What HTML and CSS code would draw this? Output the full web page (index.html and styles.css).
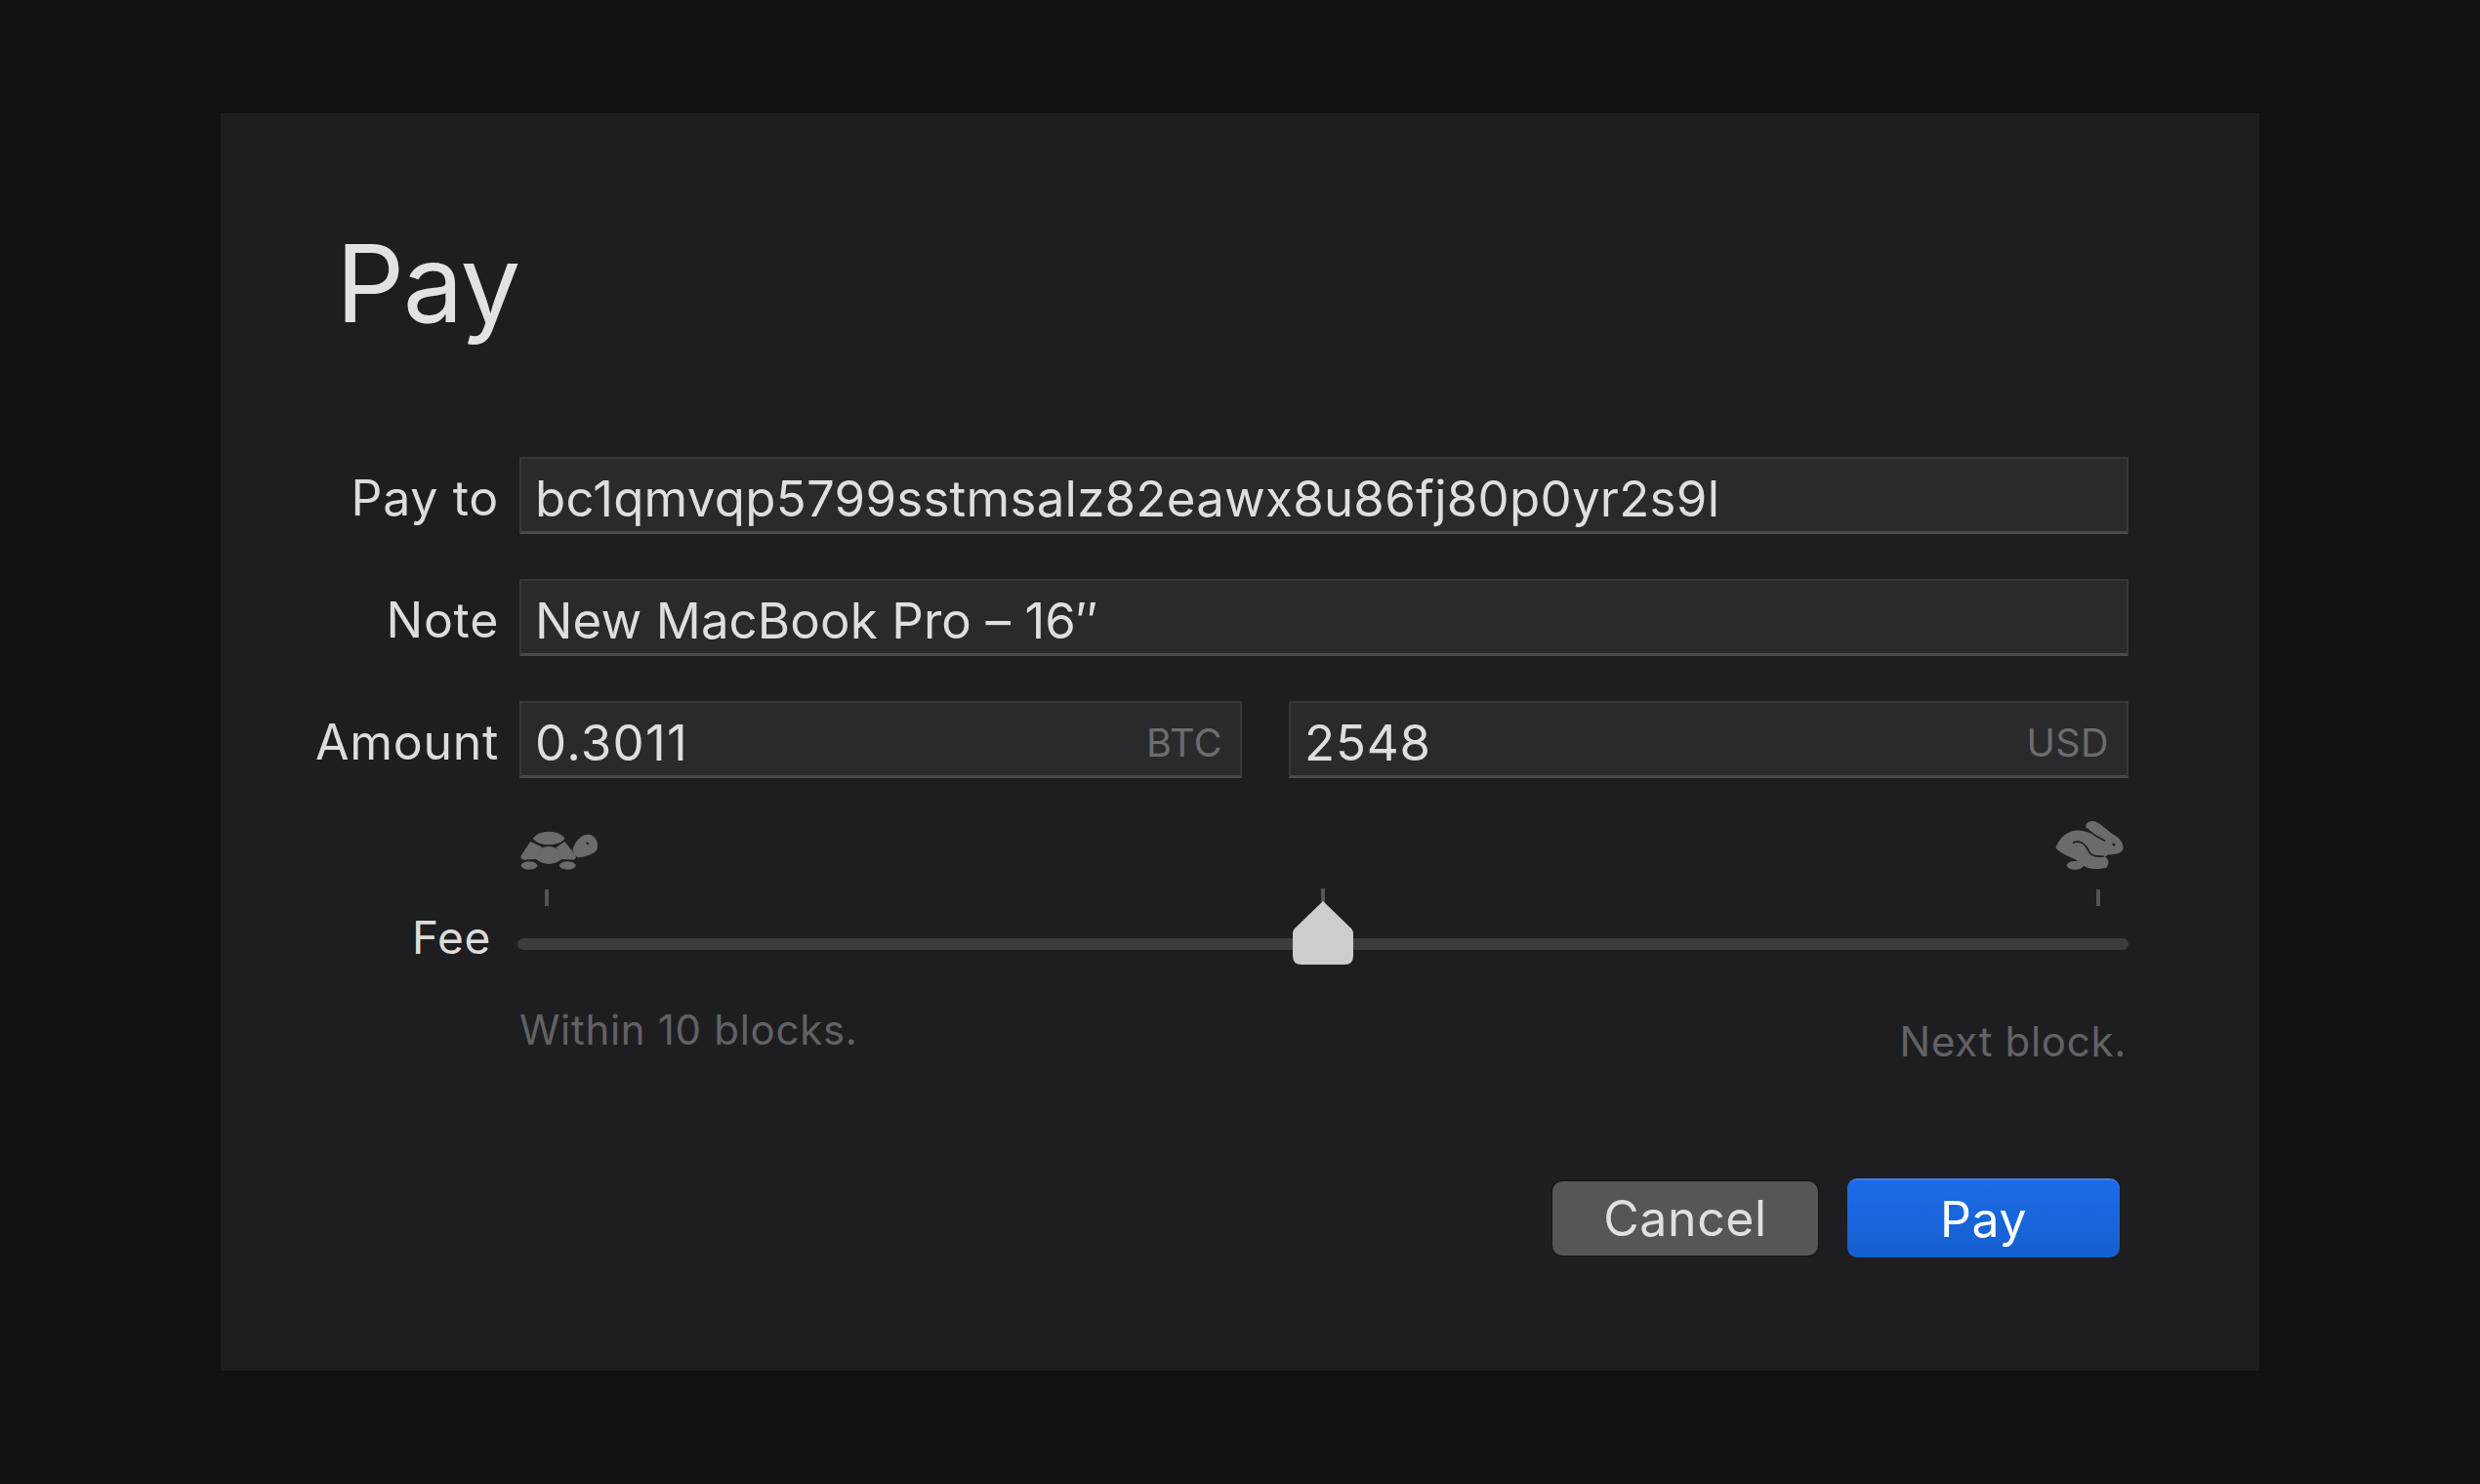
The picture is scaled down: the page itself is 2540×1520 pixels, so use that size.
FILE: index.html
```html
<!DOCTYPE html>
<html lang="en">
<head>
    <meta charset="UTF-8">
    <title>Pay</title>
    <link rel="stylesheet" href="styles.css">
</head>
<body>

    <div class="window">
        <h1>Pay</h1>

        <!-- Address, note, amount -->
        <div class="row">
            <div class="label">Pay to</div>
            <div class="field address">bc1qmvqp5799sstmsalz82eawx8u86fj80p0yr2s9l</div>
        </div>
        <div class="row">
            <div class="label">Note</div>
            <div class="field note">New MacBook Pro – 16″</div>
        </div>
        <div class="row">
            <div class="label">Amount</div>
            <div class="amounts">
                <div class="field btc">0.3011<span class="unit">BTC</span></div>
                <div class="field usd">2548<span class="unit">USD</span></div>
            </div>
        </div>

        <!-- Fee slider -->
        <div class="fee-icons">
            <svg class="turtle" viewBox="100 90 240 125">
                <path d="M140 116 C155 90 220 90 235 116 C220 140 155 140 140 116Z"/>
                <path d="M131 127 L165 143 L150 178 L108 180 Q100 176 104 168Z"/>
                <path d="M163 148 Q187 136 212 148 L225 180 Q187 206 150 180Z"/>
                <path d="M236 127 L212 143 L226 178 L265 180 Q272 176 268 168Z"/>
                <ellipse cx="127" cy="199" rx="24" ry="11"/>
                <ellipse cx="245" cy="199" rx="24" ry="11"/>
                <path fill-rule="evenodd" d="M262 152 C270 120 290 104 310 105 C330 108 338 125 335 148 C330 162 300 170 280 173 Q268 172 262 152Z M306 126 a5 5 0 1 0 .1 0Z"/>
            </svg>
            <svg class="rabbit" viewBox="130 55 215 160">
                <path fill-rule="evenodd" d="M133 143 C145 115 165 92 200 90 C218 90 235 96 245 102 C232 92 222 82 228 70 C235 58 255 58 270 70 C285 82 300 95 315 105 C330 113 342 128 342 145 C340 160 320 165 295 165 L285 172 C298 178 300 195 290 205 C270 210 245 210 232 205 C215 198 205 190 195 180 C175 170 145 160 133 143Z M313 129 a4.500 4.500 0 1 0 .1 0Z"/>
                <ellipse cx="193" cy="198" rx="26" ry="13"/>
                <path class="cut" d="M186 128 C205 120 222 128 232 148 C238 162 245 172 282 170"/>
                <path class="cut" d="M228 84 C245 100 265 112 286 122"/>
            </svg>
        </div>
        <div class="ticks">
            <span class="tick"></span>
            <span class="tick"></span>
        </div>
        <div class="row fee-row">
            <div class="label fee-label">Fee</div>
            <div class="slider">
                <span class="thumb-tick"></span>
                <svg class="thumb" viewBox="0 0 62 67">
                    <path d="M31 1 L60 29 Q62 31 62 35 V57 Q62 66 53 66 H9 Q0 66 0 57 V35 Q0 31 2 29Z"/>
                </svg>
            </div>
        </div>
        <div class="captions">
            <div class="caption">Within 10 blocks.</div>
            <div class="caption next">Next block.</div>
        </div>

        <div class="buttons">
            <div class="btn cancel">Cancel</div>
            <div class="btn pay">Pay</div>
        </div>
    </div>

</body>
</html>
```

FILE: styles.css
```css
* {
    margin: 0;
    padding: 0;
    box-sizing: border-box;
    font-family: Inter, "Liberation Sans", sans-serif;
}

body {
    width: 2540px;
    height: 1520px;
    background: #111112;
    overflow: hidden;
}

.window {
    width: 2088px;
    height: 1288px;
    margin: 116px 0 0 226px;
    padding: 109px 134px 0 74px;
    background: #1e1e20;
    color: #dcdcdc;
}

h1 {
    margin-left: 44px;
    height: 243px;
    font-size: 110px;
    line-height: 130px;
    font-weight: 370;
    letter-spacing: -1.5px;
    color: #e2e2e2;
}

.row {
    display: flex;
    align-items: center;
    gap: 21px;
    margin-bottom: 46px;
}

.label {
    width: 211px;
    padding-top: 4px;
    text-align: right;
    font-size: 50px;
    font-weight: 380;
    letter-spacing: 0.7px;
}

.field {
    display: flex;
    justify-content: space-between;
    align-items: center;
    flex: 1;
    height: 79px;
    padding: 7px 18px 0 14px;
    background: #2a2a2c;
    border: 2px solid #37373a;
    border-bottom: 3px solid #4a4a4d;
    font-size: 51px;
    font-weight: 380;
    letter-spacing: 0.8px;
    color: #dedede;
}

.address {
    letter-spacing: 0.25px;
}

.note {
    letter-spacing: 0.1px;
}

.amounts {
    display: flex;
    flex: 1;
    gap: 48px;
}

.btc {
    flex: none;
    width: 740px;
    letter-spacing: 1.3px;
}

.unit {
    font-size: 39.5px;
    font-weight: 380;
    letter-spacing: 0.4px;
    color: #6c6c6e;
}

.fee-icons {
    display: flex;
    justify-content: space-between;
    align-items: flex-end;
    height: 53px;
    margin: -4px 4px 0 233px;
}

.turtle {
    width: 80px;
    height: 42px;
    fill: #6b6b6d;
    stroke: #6b6b6d;
    stroke-width: 3;
}

.rabbit {
    width: 72px;
    height: 53px;
    fill: #6b6b6d;
}

.cut {
    fill: none;
    stroke: #1e1e20;
    stroke-width: 5;
}

.ticks {
    display: flex;
    justify-content: space-between;
    margin: 19px 29px 0 258px;
}

.tick {
    width: 4px;
    height: 17px;
    background: #555557;
}

.fee-row {
    margin: 33px 0 0 0;
    gap: 22px;
    height: 12px;
}

.fee-label {
    width: 203px;
    margin-right: 5px;
    margin-bottom: 14px;
    padding-top: 0;
    font-size: 46px;
}

.slider {
    position: relative;
    flex: 1;
    height: 12px;
    background: #3c3c3e;
    border-radius: 6px;
}

.thumb {
    position: absolute;
    left: 794px;
    top: -39px;
    width: 62px;
    height: 67px;
    fill: #cdcdcd;
}

.thumb-tick {
    position: absolute;
    left: 823px;
    top: -51px;
    width: 4px;
    height: 14px;
    background: #555557;
}

.captions {
    display: flex;
    justify-content: space-between;
    align-items: flex-start;
    margin: 56px 2px 0 232px;
}

.caption {
    font-size: 42px;
    font-weight: 380;
    letter-spacing: 0.7px;
    color: #626264;
}

.next {
    margin-top: 12px;
}

.buttons {
    display: flex;
    justify-content: flex-end;
    align-items: center;
    gap: 30px;
    margin: 115px 9px 0 0;
}

.btn {
    display: flex;
    justify-content: center;
    align-items: center;
    border-radius: 10px;
    font-size: 50px;
    font-weight: 380;
    letter-spacing: 0.6px;
}

.cancel {
    width: 272px;
    height: 76px;
    background: #565658;
    box-shadow: 0 0 0 1px rgba(0, 0, 0, 0.3);
    color: #e0e0e0;
}

.pay {
    width: 279px;
    height: 81px;
    background: linear-gradient(#1b6ae8, #155fce);
    border-top: 2px solid #3d82ea;
    color: #fff;
}
```
